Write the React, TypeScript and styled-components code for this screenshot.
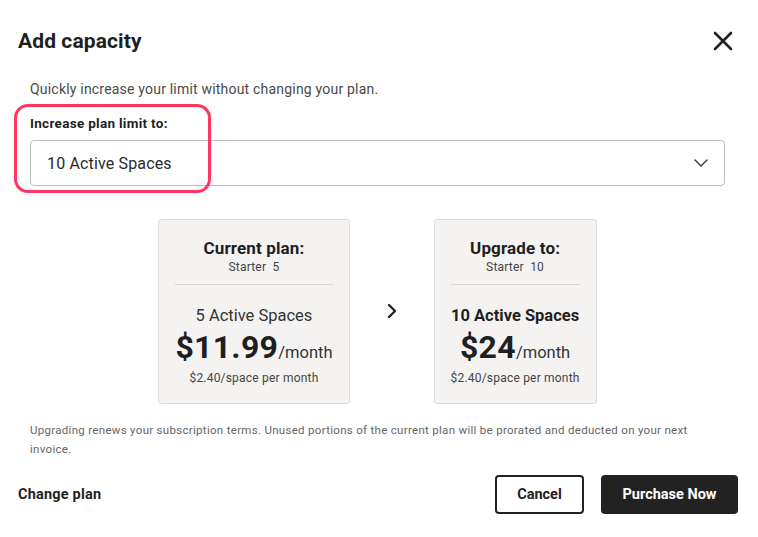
import React from "react";
import styled, { createGlobalStyle } from "styled-components";

const GlobalStyle = createGlobalStyle`
  body {
    margin: 0;
    background: #ffffff;
    font-family: Roboto, "Liberation Sans", sans-serif;
    color: #1f1f1f;
  }
`;

const Dialog = styled.div`
  width: 758px;
  height: 537px;
  background: #ffffff;
  box-sizing: border-box;
  display: flex;
  flex-direction: column;
`;

const Header = styled.div`
  display: flex;
  justify-content: space-between;
  align-items: center;
  padding: 29px 24px 0 18px;
  height: 24px;
`;

const Title = styled.h2`
  margin: 0;
  font-size: 21px;
  font-weight: 700;
  color: #1f1f1f;
  letter-spacing: 0.1px;
`;

const CloseButton = styled.button`
  border: none;
  background: none;
  padding: 0;
  width: 22px;
  height: 22px;
  display: flex;
  align-items: center;
  justify-content: center;
  cursor: pointer;
`;

const Body = styled.div`
  padding: 0 33px 0 30px;
`;

const Intro = styled.p`
  margin: 27px 0 0;
  font-size: 14px;
  letter-spacing: 0.2px;
  color: #4a4a4a;
  line-height: 18px;
`;

const Field = styled.div`
  position: relative;
  margin-top: 17px;
`;

const Highlight = styled.div`
  position: absolute;
  left: -16px;
  top: -11px;
  width: 197px;
  height: 89px;
  border: 3px solid #ff365f;
  border-radius: 14px;
  box-sizing: border-box;
  pointer-events: none;
`;

const Label = styled.div`
  font-size: 13.5px;
  font-weight: 700;
  letter-spacing: 0.3px;
  color: #1f1f1f;
  line-height: 16px;
`;

const Select = styled.div`
  margin-top: 9px;
  height: 46px;
  border: 1px solid #bdbdbd;
  border-radius: 4px;
  box-sizing: border-box;
  display: flex;
  align-items: center;
  justify-content: space-between;
  padding: 0 16px 0 16px;
  font-size: 16px;
  letter-spacing: 0.15px;
  color: #2a2a2a;
`;

const Compare = styled.div`
  display: flex;
  justify-content: center;
  align-items: center;
  margin-top: 33px;
`;

const Card = styled.div`
  background: #f4f3f2;
  border: 1px solid #dcdcdc;
  border-radius: 3px;
  padding: 18px 16px 18px;
  height: 185px;
  box-sizing: border-box;
  display: flex;
  flex-direction: column;
  align-items: center;
`;

const CardTitle = styled.div`
  font-size: 17px;
  font-weight: 700;
  letter-spacing: 0.15px;
  line-height: 20px;
  color: #1f1f1f;
`;

const PlanName = styled.div`
  font-size: 12px;
  letter-spacing: 0.2px;
  color: #444;
  margin-top: 2px;
  line-height: 14px;
  white-space: pre;
`;

const Divider = styled.div`
  align-self: stretch;
  height: 1px;
  background: #d6d6d6;
  margin-top: 10px;
`;

const Spaces = styled.div<{ $bold?: boolean }>`
  margin-top: 21px;
  font-size: 16.5px;
  font-weight: ${(p) => (p.$bold ? 700 : 400)};
  color: ${(p) => (p.$bold ? "#1f1f1f" : "#333")};
  line-height: 20px;
`;

const PriceRow = styled.div`
  display: flex;
  align-items: baseline;
  margin-top: 2px;
  line-height: 38px;
`;

const Price = styled.span`
  font-size: 32px;
  font-weight: 700;
  letter-spacing: 0.3px;
  color: #1f1f1f;
`;

const PerMonth = styled.span`
  font-size: 16.5px;
  color: #333;
`;

const PerSpace = styled.div`
  font-size: 12px;
  letter-spacing: 0.2px;
  color: #444;
  margin-top: -1px;
  line-height: 14px;
`;

const Arrow = styled.div`
  width: 84px;
  display: flex;
  justify-content: center;
  padding-bottom: 2px;
`;

const Note = styled.p`
  margin: 17px 0 0;
  padding-right: 12px;
  font-size: 11.5px;
  letter-spacing: 0.3px;
  line-height: 19px;
  color: #666;
`;

const Footer = styled.div`
  display: flex;
  justify-content: space-between;
  align-items: center;
  padding: 0 20px 0 18px;
  margin-top: 16px;
`;

const LinkButton = styled.button`
  border: none;
  background: none;
  padding: 0;
  font-family: inherit;
  font-size: 14.5px;
  letter-spacing: 0.2px;
  font-weight: 700;
  color: #1f1f1f;
  cursor: pointer;
`;

const Actions = styled.div`
  display: flex;
  gap: 17px;
`;

const Button = styled.button<{ $primary?: boolean }>`
  width: ${(p) => (p.$primary ? 137 : 89)}px;
  height: 39px;
  box-sizing: border-box;
  border-radius: 4px;
  border: 2px solid #222;
  background: ${(p) => (p.$primary ? "#222" : "#fff")};
  color: ${(p) => (p.$primary ? "#fff" : "#222")};
  font-family: inherit;
  font-size: 14.5px;
  font-weight: 700;
  padding: 0;
  cursor: pointer;
`;

const CloseIcon = () => (
  <svg width="20" height="20" viewBox="0 0 20 20" fill="none">
    <path
      d="M2 2L18 18M18 2L2 18"
      stroke="#222"
      strokeWidth="2.6"
      strokeLinecap="round"
    />
  </svg>
);

const ChevronDown = () => (
  <svg width="14" height="8" viewBox="0 0 14 8" fill="none">
    <path
      d="M1 1L7 7L13 1"
      stroke="#333"
      strokeWidth="1.4"
      strokeLinecap="round"
      strokeLinejoin="round"
    />
  </svg>
);

const ChevronRight = () => (
  <svg width="10" height="16" viewBox="0 0 10 16" fill="none">
    <path
      d="M2 2L8 8L2 14"
      stroke="#222"
      strokeWidth="2.4"
      strokeLinecap="round"
      strokeLinejoin="round"
    />
  </svg>
);

const App = () => {
  return (
    <>
      <GlobalStyle />
      <Dialog>
        <Header>
          <Title>Add capacity</Title>
          <CloseButton aria-label="Close">
            <CloseIcon />
          </CloseButton>
        </Header>
        <Body>
          <Intro>Quickly increase your limit without changing your plan.</Intro>
          {/* plan limit selector */}
          <Field>
            <Label>Increase plan limit to:</Label>
            <Select>
              <span>10 Active Spaces</span>
              <ChevronDown />
            </Select>
            <Highlight />
          </Field>
          {/* current vs upgrade comparison */}
          <Compare>
            <Card>
              <CardTitle>Current plan:</CardTitle>
              <PlanName>Starter  5</PlanName>
              <Divider />
              <Spaces>5 Active Spaces</Spaces>
              <PriceRow>
                <Price>$11.99</Price>
                <PerMonth>/month</PerMonth>
              </PriceRow>
              <PerSpace>$2.40/space per month</PerSpace>
            </Card>
            <Arrow>
              <ChevronRight />
            </Arrow>
            <Card>
              <CardTitle>Upgrade to:</CardTitle>
              <PlanName>Starter  10</PlanName>
              <Divider />
              <Spaces $bold>10 Active Spaces</Spaces>
              <PriceRow>
                <Price>$24</Price>
                <PerMonth>/month</PerMonth>
              </PriceRow>
              <PerSpace>$2.40/space per month</PerSpace>
            </Card>
          </Compare>
          <Note>
            Upgrading renews your subscription terms. Unused portions of the
            current plan will be prorated and deducted on your next invoice.
          </Note>
        </Body>
        <Footer>
          <LinkButton>Change plan</LinkButton>
          <Actions>
            <Button>Cancel</Button>
            <Button $primary>Purchase Now</Button>
          </Actions>
        </Footer>
      </Dialog>
    </>
  );
};

export default App;
